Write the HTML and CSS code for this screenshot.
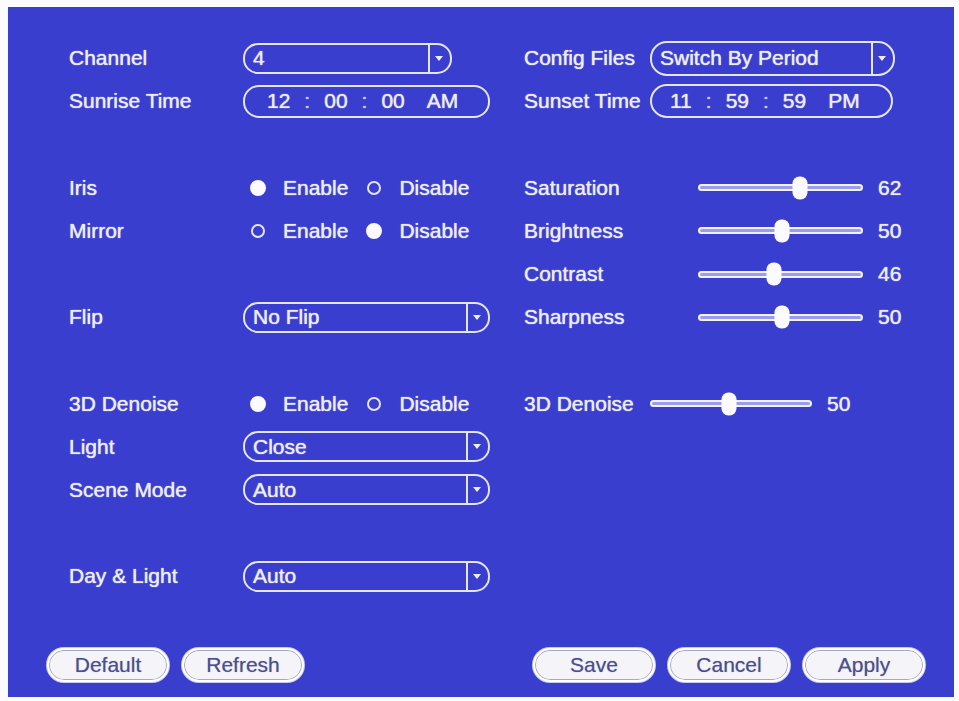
FILE: index.html
```html
<!DOCTYPE html>
<html>
<head>
	<title>Camera Settings</title>
	<link rel="stylesheet" href="styles.css">
</head>
<body>
	<div class="panel">
		<div class="form">
			<!-- left column -->
			<div class="col">
				<div class="row">
					<span class="label">Channel</span>
					<div class="select short"><span class="value">4</span><span class="arrow"></span></div>
				</div>
				<div class="row">
					<span class="label">Sunrise Time</span>
					<div class="time">
						<span>12</span><span class="colon">:</span><span>00</span><span class="colon">:</span><span>00</span><span class="ampm">AM</span>
					</div>
				</div>
				<div class="row"></div>
				<div class="row">
					<span class="label">Iris</span>
					<div class="radios">
						<span class="opt"><span class="dot on"></span>Enable</span>
						<span class="opt"><span class="dot"></span>Disable</span>
					</div>
				</div>
				<div class="row">
					<span class="label">Mirror</span>
					<div class="radios">
						<span class="opt"><span class="dot"></span>Enable</span>
						<span class="opt"><span class="dot on"></span>Disable</span>
					</div>
				</div>
				<div class="row"></div>
				<div class="row">
					<span class="label">Flip</span>
					<div class="select"><span class="value">No Flip</span><span class="arrow"></span></div>
				</div>
				<div class="row"></div>
				<div class="row">
					<span class="label">3D Denoise</span>
					<div class="radios">
						<span class="opt"><span class="dot on"></span>Enable</span>
						<span class="opt"><span class="dot"></span>Disable</span>
					</div>
				</div>
				<div class="row">
					<span class="label">Light</span>
					<div class="select"><span class="value">Close</span><span class="arrow"></span></div>
				</div>
				<div class="row">
					<span class="label">Scene Mode</span>
					<div class="select"><span class="value">Auto</span><span class="arrow"></span></div>
				</div>
				<div class="row"></div>
				<div class="row">
					<span class="label">Day &amp; Light</span>
					<div class="select"><span class="value">Auto</span><span class="arrow"></span></div>
				</div>
			</div>

			<!-- right column -->
			<div class="col right">
				<div class="row">
					<span class="label">Config Files</span>
					<div class="select tall"><span class="value">Switch By Period</span><span class="arrow"></span></div>
				</div>
				<div class="row">
					<span class="label">Sunset Time</span>
					<div class="time tall">
						<span>11</span><span class="colon">:</span><span>59</span><span class="colon">:</span><span>59</span><span class="ampm">PM</span>
					</div>
				</div>
				<div class="row"></div>
				<div class="row">
					<span class="label wide">Saturation</span>
					<div class="track"><span class="thumb" style="left: 62%"></span></div>
					<span class="num">62</span>
				</div>
				<div class="row">
					<span class="label wide">Brightness</span>
					<div class="track"><span class="thumb" style="left: 51%"></span></div>
					<span class="num">50</span>
				</div>
				<div class="row">
					<span class="label wide">Contrast</span>
					<div class="track"><span class="thumb" style="left: 46%"></span></div>
					<span class="num">46</span>
				</div>
				<div class="row">
					<span class="label wide">Sharpness</span>
					<div class="track"><span class="thumb" style="left: 51%"></span></div>
					<span class="num">50</span>
				</div>
				<div class="row"></div>
				<div class="row">
					<span class="label">3D Denoise</span>
					<div class="track"><span class="thumb" style="left: 49%"></span></div>
					<span class="num">50</span>
				</div>
				<div class="row"></div>
				<div class="row"></div>
				<div class="row"></div>
				<div class="row"></div>
			</div>
		</div>

		<div class="buttons">
			<div class="group">
				<button>Default</button>
				<button>Refresh</button>
			</div>
			<div class="group">
				<button>Save</button>
				<button>Cancel</button>
				<button>Apply</button>
			</div>
		</div>
	</div>
</body>
</html>
```

FILE: styles.css
```css
body{
	margin: 0;
	background: #fbfbfd;
	font-family: "Liberation Sans", Arial, sans-serif;
}

.panel{
	margin: 7px 5px 0 8px;
	height: 690px;
	box-sizing: border-box;
	padding: 29.5px 29px 0 39px;
	background: #3a3ece;
	color: #eceeff;
	text-shadow: 0 0 1px rgba(236,238,255,0.8), 0 0 1px rgba(236,238,255,0.5);
}

.form{
	display: grid;
	grid-template-columns: 455px 1fr;
	padding-left: 22px;
}

.col{
	display: grid;
	grid-template-rows: repeat(13, 43.2px);
}

.row{
	display: flex;
	align-items: center;
	font-size: 21px;
}

.label{
	width: 174px;
	flex-shrink: 0;
}

.right .label{
	width: 126px;
}

.right .label.wide{
	width: 174px;
}

/* drop-down box */
.select{
	box-sizing: border-box;
	width: 247px;
	height: 31px;
	display: flex;
	align-items: center;
	border: 2px solid #e4e6ff;
	border-radius: 15px;
}

.select.short{
	width: 209px;
}

.select.tall{
	width: 245px;
	height: 35px;
	border-radius: 17px;
}

.select .value{
	flex: 1;
	padding-left: 8px;
	white-space: nowrap;
}

.select .arrow{
	width: 20px;
	align-self: stretch;
	border-left: 2px solid #e4e6ff;
	display: flex;
	align-items: center;
	justify-content: center;
}

.select .arrow::before{
	content: "";
	border-left: 4px solid transparent;
	border-right: 4px solid transparent;
	border-top: 5px solid #eceeff;
	margin-right: 3px;
}

/* time box */
.time{
	box-sizing: border-box;
	width: 247px;
	height: 33px;
	display: flex;
	align-items: center;
	padding-left: 22px;
	border: 2px solid #e4e6ff;
	border-radius: 16px;
}

.time.tall{
	width: 243px;
	height: 34px;
	padding-left: 18px;
	border-radius: 17px;
}

.time .colon{
	margin: 0 14px;
	color: #c9ccf6;
}

.time .ampm{
	margin-left: 22px;
}

/* radio buttons */
.radios{
	display: flex;
	align-items: center;
	padding-left: 7px;
}

.opt{
	display: flex;
	align-items: center;
	margin-right: 18px;
}

.dot{
	box-sizing: border-box;
	width: 14px;
	height: 14px;
	margin: 0 18px 0 1px;
	border: 2px solid #e4e6ff;
	border-radius: 50%;
}

.dot.on{
	width: 16px;
	height: 16px;
	margin: 0 17px 0 0;
	background: #fafaff;
	border-color: #fafaff;
}

/* sliders */
.track{
	position: relative;
	box-sizing: border-box;
	width: 165px;
	height: 7px;
	border: 2px solid #f2f2ff;
	border-radius: 4px;
	background: #9a9def;
}

.right .row:nth-child(9) .track{
	width: 162px;
}

.thumb{
	position: absolute;
	top: 50%;
	width: 15px;
	height: 23px;
	border-radius: 7px;
	background: #fbfbff;
	transform: translate(-50%, -50%);
}

.num{
	margin-left: 15px;
}

/* bottom buttons */
.buttons{
	display: flex;
	justify-content: space-between;
	margin-top: 50px;
}

.group{
	display: flex;
	gap: 13px;
}

button{
	box-sizing: border-box;
	width: 122px;
	height: 34px;
	padding: 0;
	border: 2px solid #ffffff;
	border-radius: 17px;
	background: #f5f5f9;
	box-shadow: inset 0 0 0 1px #a6a8c4, 0 0 0 1px #c9cbf0;
	color: #4b4e8e;
	font-family: "Liberation Sans", Arial, sans-serif;
	font-size: 21px;
	text-shadow: 0 0 1px rgba(75,78,142,0.5);
}
```
